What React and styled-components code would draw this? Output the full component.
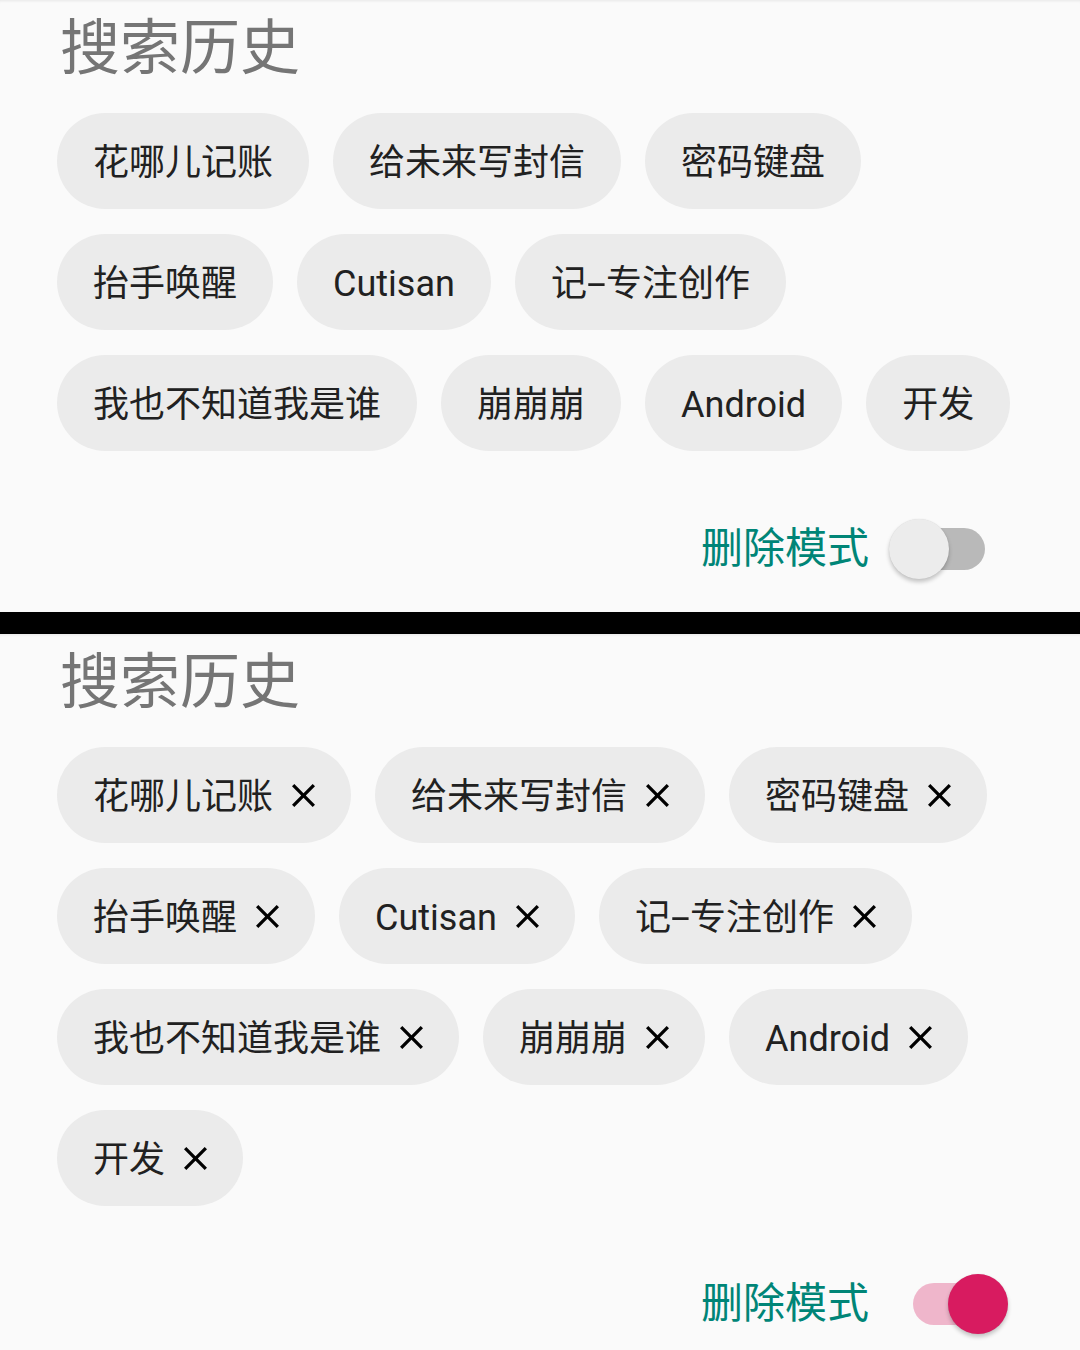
import React from 'react'
import styled, { createGlobalStyle } from 'styled-components'

const GlobalStyle = createGlobalStyle`
    body {
        margin: 0;
        background: #fafafa;
        font-family: Roboto, "Noto Sans CJK SC", sans-serif;
    }
`

const Panel = styled.section`
    background: #fafafa;
    padding: 19px 66px 33px 57px;
    box-shadow: inset 0 3px 3px -2px rgba(0, 0, 0, 0.08);
`

const Title = styled.h2`
    margin: 0 0 0 3px;
    font-size: 60px;
    line-height: 60px;
    font-weight: 400;
    color: #757575;
`

const TagList = styled.div`
    display: flex;
    flex-wrap: wrap;
    gap: 25px 24px;
    margin-top: 34px;
`

const Chip = styled.div`
    box-sizing: border-box;
    display: inline-flex;
    align-items: center;
    gap: 19px;
    height: 96px;
    padding: 3px 36px 0;
    border-radius: 48px;
    background: #ebebeb;
    color: #212121;
    font-size: 36px;
    line-height: 1;
    white-space: nowrap;

    svg {
        margin-top: -3px;
    }
`

// the hyphen in the reference is wider than Roboto's
const Dash = styled.span`
    display: inline-block;
    width: 19px;
    text-align: center;
    transform: scaleX(1.9);
`

const ModeRow = styled.div`
    display: flex;
    justify-content: flex-end;
    align-items: center;
    gap: 20px;
    height: 60px;
    margin-top: 68px;
    padding-right: 5px;
`

const ModeLabel = styled.span`
    font-size: 42px;
    line-height: 1;
    color: #008577;
`

const Switch = styled.div`
    position: relative;
    width: 120px;
    height: 60px;
`

const Track = styled.div`
    position: absolute;
    left: 24px;
    top: 9px;
    width: 72px;
    height: 42px;
    border-radius: 21px;
    background: ${p => (p.$on ? 'rgba(216, 27, 96, 0.3)' : '#b9b9b9')};
`

const Thumb = styled.div`
    position: absolute;
    top: 0;
    left: ${p => (p.$on ? '59px' : '0')};
    width: 60px;
    height: 60px;
    border-radius: 50%;
    background: ${p => (p.$on ? '#d81b60' : '#ececec')};
    box-shadow: 0 3px 4px rgba(0, 0, 0, 0.22), 0 0 1px rgba(0, 0, 0, 0.12);
`

const Divider = styled.div`
    height: 22px;
    background: #000;
`

const tags = ['花哪儿记账', '给未来写封信', '密码键盘', '抬手唤醒', 'Cutisan', '记-专注创作', '我也不知道我是谁', '崩崩崩', 'Android', '开发']

const Label = ({ text }) => {
    const parts = text.split('-')
    if (parts.length === 1) return text
    return (
        <span>
            {parts[0]}
            <Dash>-</Dash>
            {parts.slice(1).join('-')}
        </span>
    )
}

const CloseIcon = () => (
    <svg width="23" height="23" viewBox="5 5 14 14">
        <path fill="#000" d="M19 6.41L17.59 5 12 10.59 6.41 5 5 6.41 10.59 12 5 17.59 6.41 19 12 13.41 17.59 19 19 17.59 13.41 12z" />
    </svg>
)

const History = ({ deleteMode }) => (
    <Panel>
        <Title>搜索历史</Title>
        <TagList>
            {tags.map(t => (
                <Chip key={t}>
                    <Label text={t} />
                    {deleteMode && <CloseIcon />}
                </Chip>
            ))}
        </TagList>
        <ModeRow>
            <ModeLabel>删除模式</ModeLabel>
            <Switch>
                <Track $on={deleteMode} />
                <Thumb $on={deleteMode} />
            </Switch>
        </ModeRow>
    </Panel>
)

const App = () => (
    <>
        <GlobalStyle />
        <History deleteMode={false} />
        <Divider />
        <History deleteMode />
    </>
)

export default App
